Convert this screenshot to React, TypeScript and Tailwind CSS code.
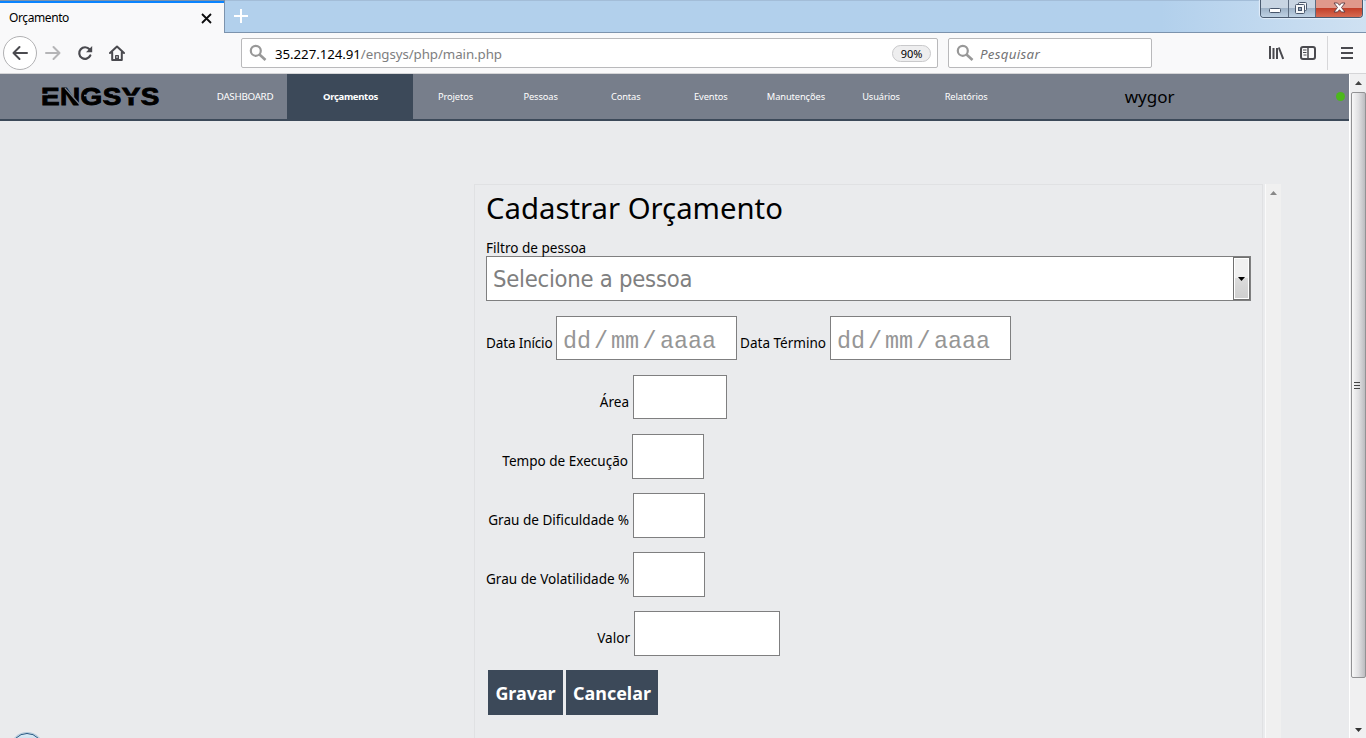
import React from "react";

const UI = "font-['Noto_Sans',sans-serif]";

const navItems = ["Projetos", "Pessoas", "Contas", "Eventos", "Manutenções", "Usuários", "Relatórios"];

function SearchIcon() {
  return (
    <svg width="18" height="18" viewBox="0 0 18 18" fill="none" stroke="#989898" className="shrink-0">
      <circle cx="6.8" cy="6.8" r="5" strokeWidth="2.2" />
      <path d="M10.5 10.5L16.5 16" strokeWidth="2.6" />
    </svg>
  );
}

function TabStrip() {
  return (
    <div className="flex h-[33px] bg-[#b2d0ec] bg-linear-to-r from-[#b2d0ec] from-85% to-[#cfe1f2]">
      <div className="flex h-[33px] w-[225px] items-center justify-between border-t border-r border-[#7c93ad] bg-[#f9f9fa] pr-[12px] pl-[9px] shadow-[inset_0_2px_0_#0a84ff]">
        <span className="pt-[2px] text-[12px] tracking-[-0.4px]">Orçamento</span>
        <svg width="11" height="11" viewBox="0 0 11 11" stroke="#0c0c0d" strokeWidth="1.8" className="mt-[2px]">
          <path d="M1 1l9 9M10 1l-9 9" />
        </svg>
      </div>
      <div className="flex flex-1 justify-between border-t border-b border-t-[#a3bdd8] border-b-[#7c93ad]">
        <svg width="14" height="14" viewBox="0 0 14 14" stroke="#ffffff" strokeWidth="2" className="mt-[8px] ml-[9px]">
          <path d="M7 0v14M0 7h14" />
        </svg>
        <div className="-mt-px mr-[3px] flex h-[18px] w-[103px] overflow-hidden rounded-b-[4px] border border-t-0 border-[#4b5b70] shadow-[0_0_1px_1px_#e3eefa]">
          <div className="flex w-[28px] items-center justify-center border-r border-[#5d6c80] bg-linear-to-b from-[#c8d5e3] from-45% via-[#9fb3c8] via-50% to-[#bfd2e4]">
            <svg width="12" height="5" viewBox="0 0 12 5" className="mt-[3px]">
              <rect x=".5" y=".5" width="11" height="4" rx="1" fill="#fff" stroke="#48566b" />
            </svg>
          </div>
          <div className="flex w-[27px] items-center justify-center border-r border-[#5d6c80] bg-linear-to-b from-[#c8d5e3] from-45% via-[#9fb3c8] via-50% to-[#bfd2e4]">
            <svg width="12" height="12" viewBox="0 0 12 12" fill="#f5f7f9" stroke="#48566b" className="-mt-[2px] -ml-[3px]">
              <rect x="3.5" y=".5" width="8" height="8" rx="1" />
              <rect x=".5" y="2.5" width="9" height="9" rx="1" />
              <rect x="3.5" y="5.5" width="3" height="3" fill="#91a2b6" />
            </svg>
          </div>
          <div className="flex flex-1 items-center justify-center bg-linear-to-b from-[#e0998b] from-45% via-[#c3402a] via-50% to-[#d76a52]">
            <svg width="13" height="11" viewBox="0 0 13 11" fill="#fff" stroke="#5b3a42" strokeWidth=".9" className="-mt-[2px]">
              <path d="M1 1h3.5L6.500 3.300 8.500 1H12L8.500 5.500 12 10H8.500L6.500 7.700 4.500 10H1l3.500-4.500z" />
            </svg>
          </div>
        </div>
      </div>
    </div>
  );
}

function Toolbar() {
  return (
    <div className="flex h-[41px] items-start border-b border-[#d5d5d7] bg-[#f9f9fa]">
      <div className="flex w-[241px] shrink-0 items-center pt-[3px] pl-[3px]">
        <div className="flex size-[34px] items-center justify-center rounded-full border border-[#b1b1b3] bg-white">
          <svg width="16" height="16" viewBox="0 0 16 16" fill="none" stroke="#4a4a4f" strokeWidth="2" strokeLinecap="round" strokeLinejoin="round">
            <path d="M15 8H1.500M7.500 2L1.500 8l6 6" />
          </svg>
        </div>
        <svg width="16" height="16" viewBox="0 0 16 16" fill="none" stroke="#b5b5b7" strokeWidth="2" strokeLinecap="round" strokeLinejoin="round" className="ml-[8px]">
          <path d="M1 8h13.500M8.500 2l6 6-6 6" />
        </svg>
        <svg width="16" height="16" viewBox="0 0 16 16" fill="none" stroke="#4a4a4f" strokeWidth="2.2" strokeLinecap="round" className="ml-[16px]">
          <path d="M12.500 4.300A5.800 5.800 0 1 0 13.300 10.500" />
          <path d="M15.200 1v6.200H9z" fill="#4a4a4f" stroke="none" />
        </svg>
        <svg width="16" height="16" viewBox="0 0 16 16" fill="none" stroke="#4a4a4f" strokeWidth="2" strokeLinecap="round" strokeLinejoin="round" className="ml-[16px]">
          <path d="M1 8l7-6.500L15 8M3.200 7.500V15h9.600V7.500" />
          <path d="M6.500 14.500v-4h3v4z" fill="#4a4a4f" strokeWidth="1" />
          <path d="M8 11.500v1" stroke="#f9f9fa" strokeWidth="1" />
        </svg>
      </div>
      <div className="mt-[5px] flex h-[30px] w-[697px] shrink-0 items-center rounded-[2px] border border-[#b9b9bb] bg-white pr-[6px] pl-[7px]">
        <SearchIcon />
        <span className="ml-[8px] pt-[3px] text-[13.3px] tracking-[-0.07px] text-[#7e7e80]">
          <span className="text-black">35.227.124.91</span>/engsys/php/main.php
        </span>
        <span className="ml-auto flex h-[17px] w-[39px] items-center justify-center rounded-full border border-[#c9c9cb] bg-[#eeeeef] pt-[2px] text-[11px] text-black">90%</span>
      </div>
      <div className="mt-[5px] ml-[10px] flex h-[30px] w-[204px] shrink-0 items-center rounded-[2px] border border-[#b9b9bb] bg-white pl-[7px]">
        <SearchIcon />
        <span className="ml-[6px] pt-[3px] text-[13.3px] tracking-[0.3px] text-[#737375] italic">Pesquisar</span>
      </div>
      <div className="flex h-[40px] flex-1 items-center">
        <svg width="16" height="16" viewBox="0 0 16 16" stroke="#4a4a4f" strokeWidth="2" className="ml-[116px]">
          <path d="M2 1v13M5.500 3v11M9 3v11M10.800 2.500L15.200 14" />
        </svg>
        <svg width="16" height="16" viewBox="0 0 16 16" fill="none" stroke="#4a4a4f" strokeWidth="2" className="ml-[16px]">
          <rect x="1" y="2" width="14" height="12" rx="2" />
          <path d="M8 2v12" strokeWidth="1.500" />
          <path d="M3 5h3.500M3 7.500h3.500M3.500 10h3" strokeWidth="1" />
        </svg>
        <div className="ml-[11px] h-[34px] w-px bg-[#d7d7d9]" />
        <svg width="12" height="12" viewBox="0 0 12 12" stroke="#4a4a4f" strokeWidth="2" className="ml-[13px]">
          <path d="M0 1h12M0 6h12M0 11h12" />
        </svg>
      </div>
    </div>
  );
}

function Logo() {
  return (
    <div className="relative ml-[41px] h-[24px] w-[120px]">
      <span className="block origin-top-left scale-x-[1.16] font-['Liberation_Sans',sans-serif] text-[24px] leading-[24px] font-bold tracking-[0.4px] text-black [-webkit-text-stroke:0.9px_#000]">ENGSYS</span>
      <svg width="120" height="24" viewBox="0 0 120 24" fill="none" stroke="#777e8b" strokeWidth="1.3" className="absolute top-0 left-0">
        <path d="M0 9.500h7M24 3l16 18M43 10.500h8M63 14.500h7M72 9.500h7M85 11.500h10M101 14.500h7M111 9.500h8" />
      </svg>
    </div>
  );
}

function NavBar() {
  return (
    <nav className="flex h-[47px] items-center border-b-2 border-[#3c4959] bg-[#777e8b] text-[9.3px] text-white">
      <div className="w-[203px] shrink-0">
        <Logo />
      </div>
      <div className="w-[84px] shrink-0 pt-[2px] text-center text-[9.8px] tracking-[-0.3px]">DASHBOARD</div>
      <div className="flex h-[45px] w-[126px] shrink-0 items-center justify-center bg-[#3c4959] pt-[2px] pl-px text-[9.5px] font-bold tracking-[-0.3px]">Orçamentos</div>
      {navItems.map((item) => (
        <div key={item} className="w-[85.1px] shrink-0 text-center tracking-[-0.1px]">
          {item}
        </div>
      ))}
      <div className="ml-[40px] w-[202px] text-center text-[17px] text-black">wygor</div>
      <div className="mr-[4px] ml-auto size-[9px] rounded-full bg-[#4cb81c]" />
    </nav>
  );
}

type FieldProps = { label: string; rowClass: string; labelClass: string; boxClass: string };

function Field({ label, rowClass, labelClass, boxClass }: FieldProps) {
  return (
    <div className={"flex " + rowClass}>
      <span className={"shrink-0 pt-[17px] text-right leading-[20px] whitespace-nowrap " + labelClass}>{label}</span>
      <span className={"ml-[4px] shrink-0 border border-[#7f7f80] bg-white " + boxClass} />
    </div>
  );
}

function DateBox() {
  return (
    <span className="flex h-[44px] w-[181px] shrink-0 items-center border border-[#7f7f80] bg-white pt-[9px] pl-[6px] font-['Liberation_Mono',monospace] text-[23.4px] text-[#969696]">
      <span className="w-[28px]">dd</span>
      <span className="w-[20px] text-center">/</span>
      <span className="w-[28px]">mm</span>
      <span className="w-[21px] text-center">/</span>
      <span>aaaa</span>
    </span>
  );
}

function BudgetForm() {
  return (
    <div className="h-[554px] w-[789px] shrink-0 border border-b-0 border-[#e0e1e3] pl-[11px] text-[13.55px] text-black">
      <h1 className="mt-[2px] h-[42px] text-[29.3px] leading-[42px] whitespace-nowrap">Cadastrar Orçamento</h1>
      <div className="mt-[9px] h-[18px] leading-[20px]">Filtro de pessoa</div>
      <div className="flex h-[45px] w-[765px] justify-between border border-[#7f7f80] bg-white">
        <span className="pl-[6px] font-['DejaVu_Sans_Condensed','DejaVu_Sans',sans-serif] text-[23.6px] leading-[45px] font-stretch-condensed tracking-[-0.25px] text-[#7f7f80]">Selecione a pessoa</span>
        <div className="flex w-[17px] border border-[#707070] bg-white p-px">
          <div className="flex flex-1 items-center justify-center bg-linear-to-b from-[#f0f0f0] from-50% via-[#dcdcdc] via-50% to-[#cfcfcf]">
            <svg width="7" height="4" viewBox="0 0 7 4">
              <path d="M0 0h7L3.500 4z" fill="#000" />
            </svg>
          </div>
        </div>
      </div>
      <div className="mt-[15px] mb-[15px] flex h-[44px]">
        <span className="w-[70px] shrink-0 pt-[17px] leading-[20px] tracking-[-0.15px] whitespace-nowrap">Data Início</span>
        <DateBox />
        <span className="w-[93px] shrink-0 pt-[17px] pl-[3px] leading-[20px] whitespace-nowrap">Data Término</span>
        <DateBox />
      </div>
      <Field label="Área" rowClass="mb-[15px]" labelClass="w-[143px]" boxClass="h-[44px] w-[94px]" />
      <Field label="Tempo de Execução" rowClass="mb-[14px]" labelClass="w-[142px]" boxClass="h-[45px] w-[72px]" />
      <Field label="Grau de Dificuldade %" rowClass="mb-[14px]" labelClass="w-[143px]" boxClass="h-[45px] w-[72px]" />
      <Field label="Grau de Volatilidade %" rowClass="mb-[14px]" labelClass="w-[143px]" boxClass="h-[45px] w-[72px]" />
      <Field label="Valor" rowClass="mb-[14px]" labelClass="w-[144px]" boxClass="h-[45px] w-[146px]" />
      <div className="flex gap-[3px] pl-[2px] text-[17.9px] font-bold text-white">
        <button className="h-[45px] w-[75px] bg-[#3c4959] pt-[2px]">Gravar</button>
        <button className="h-[45px] w-[92px] bg-[#3c4959] pt-[2px]">Cancelar</button>
      </div>
    </div>
  );
}

function PageScrollbar() {
  return (
    <div className="flex w-[17px] shrink-0 flex-col items-center border-l border-white bg-[#f0f0f1]">
      <svg width="7" height="4" viewBox="0 0 7 4" className="mt-[7px]">
        <path d="M0 4h7L3.500 0z" fill="#444" />
      </svg>
      <div className="mt-[7px] flex h-[586px] w-[15px] shrink-0 items-center justify-center rounded-[2px] border border-[#929294] bg-linear-to-r from-[#f8f8f8] via-[#e0e0e2] via-50% to-[#bcbcc0]">
        <svg width="8" height="9" viewBox="0 0 8 9" stroke="#444" className="-ml-[2px]">
          <path d="M1 1.500h6M1 4.500h6M1 7.500h6" />
        </svg>
      </div>
      <svg width="7" height="4" viewBox="0 0 7 4" className="mt-auto mb-[6px]">
        <path d="M0 0h7L3.500 4z" fill="#333" />
      </svg>
    </div>
  );
}

export default function App() {
  return (
    <div className={"flex h-[738px] w-[1366px] flex-col overflow-hidden bg-[#eaebed] " + UI}>
      <TabStrip />
      <Toolbar />
      <div className="flex h-[664px]">
        <div className="relative w-[1349px] shrink-0">
          <NavBar />
          <div className="flex pt-[63px] pl-[474px]">
            <BudgetForm />
            <div className="ml-[2px] flex h-[554px] w-[16px] justify-center border-l border-[#fafafa] bg-[#f0f0f0]">
              <svg width="7" height="4" viewBox="0 0 7 4" className="mt-[7px]">
                <path d="M0 4h7L3.500 0z" fill="#888" />
              </svg>
            </div>
          </div>
          <div className="absolute -bottom-[27px] left-[11px] size-[32px] rounded-full border border-[#235580] bg-linear-to-b from-[#dcecf6] to-[#7aa6c8] ring-1 ring-[#b5cbdc]" />
        </div>
        <PageScrollbar />
      </div>
    </div>
  );
}
